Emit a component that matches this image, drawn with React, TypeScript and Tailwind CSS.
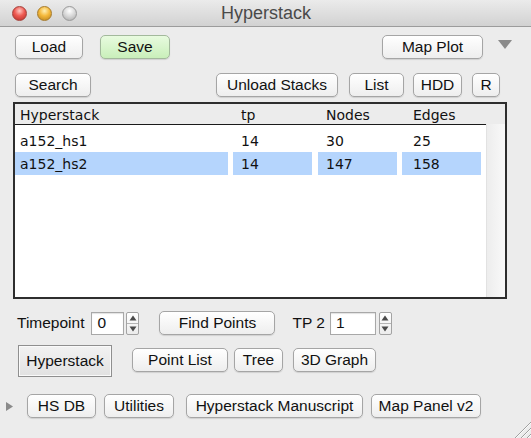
import React from "react";

const btnBase =
  "flex items-center justify-center h-[24px] rounded-[5px] border shadow-[0_1px_1px_rgba(0,0,0,0.12)] text-[15.5px] text-[#111] leading-none font-['Liberation_Sans',Arial,sans-serif] bg-linear-to-b";
const plain = "border-[#a5a5a5] from-white to-[#eeeeee]";
const green = "border-[#a3b99c] from-[#e8fbdf] to-[#c9efba]";

function Btn({
  w,
  children,
  extra = "",
  variant = plain,
}: {
  w: string;
  children: React.ReactNode;
  extra?: string;
  variant?: string;
}) {
  return <div className={`${btnBase} ${variant} ${w} ${extra}`}>{children}</div>;
}

function Stepper() {
  return (
    <div className="flex flex-col w-[13px] h-[23px] border border-[#a3a3a3] bg-linear-to-b from-white to-[#ececec] rounded-[2px]">
      <div className="flex-1 flex items-center justify-center border-b border-[#b5b5b5]">
        <svg width="8" height="6" viewBox="0 0 8 6">
          <path d="M4 0.5 L7.5 5.5 L0.5 5.5 Z" fill="#4a4a4a" />
        </svg>
      </div>
      <div className="flex-1 flex items-center justify-center">
        <svg width="8" height="6" viewBox="0 0 8 6">
          <path d="M0.5 0.5 L7.5 0.5 L4 5.5 Z" fill="#4a4a4a" />
        </svg>
      </div>
    </div>
  );
}

function Light({ cls }: { cls: string }) {
  return <div className={`w-[15px] h-[15px] rounded-full ${cls}`} />;
}

const rows = [
  { name: "a152_hs1", tp: "14", nodes: "30", edges: "25", sel: false },
  { name: "a152_hs2", tp: "14", nodes: "147", edges: "158", sel: true },
];

export default function App() {
  return (
    <div className="relative w-[531px] h-[438px] overflow-hidden bg-[#ececec] font-['Liberation_Sans',Arial,sans-serif] text-[#111]">
      {/* Title bar */}
      <div className="relative h-[27px] flex items-center bg-linear-to-b from-[#ebebeb] to-[#d2d2d2] border-b border-[#9c9c9c]">
        <div className="flex items-center gap-[10px] pl-[12px]">
          <Light cls="bg-[radial-gradient(circle_at_50%_30%,#ffc9c4,#ee5a52_45%,#b22d27)] border border-[#a6403a]" />
          <Light cls="bg-[radial-gradient(circle_at_50%_30%,#fff0b5,#f5b93b_45%,#b7801c)] border border-[#a67a2a]" />
          <Light cls="bg-[radial-gradient(circle_at_50%_30%,#ffffff,#d6d6d6_50%,#a8a8a8)] border border-[#9a9a9a]" />
        </div>
        <div className="absolute inset-0 flex items-center justify-center text-[18px] text-[#4a4a4a] pl-[1px]">
          Hyperstack
        </div>
      </div>

      {/* Row 1 */}
      <div className="flex items-center mt-[8px] pl-[15px] pr-[19px]">
        <Btn w="w-[68px]">Load</Btn>
        <Btn w="w-[70px]" extra="ml-[17px]" variant={green}>
          Save
        </Btn>
        <Btn w="w-[101px]" extra="ml-auto">
          Map Plot
        </Btn>
        <svg className="ml-[15px] mb-[6px]" width="14" height="9" viewBox="0 0 14 9">
          <path d="M0 0 L14 0 L7 9 Z" fill="#8a8a8a" />
        </svg>
      </div>

      {/* Row 2 */}
      <div className="flex items-center mt-[14px] pl-[15px]">
        <Btn w="w-[76px]">Search</Btn>
        <Btn w="w-[122px]" extra="ml-[125px]">
          Unload Stacks
        </Btn>
        <Btn w="w-[55px]" extra="ml-[11px]">
          List
        </Btn>
        <Btn w="w-[49px]" extra="ml-[9px]">
          HDD
        </Btn>
        <Btn w="w-[28px]" extra="ml-[10px]">
          R
        </Btn>
      </div>

      {/* Table */}
      <div className="ml-[13px] mt-[5px] w-[494px] h-[197px] border-2 border-[#2e2e2e] bg-white flex flex-col font-['DejaVu_Sans',Verdana,sans-serif] text-[14px] text-[#111] overflow-hidden">
        <div className="h-[20px] flex items-center pt-[3px] bg-[#ececec] shrink-0">
          <div className="w-[218px] pl-[5px]">Hyperstack</div>
          <div className="w-[85px] pl-[8px]">tp</div>
          <div className="w-[84px] pl-[8px]">Nodes</div>
          <div className="pl-[11px]">Edges</div>
        </div>
        <div className="flex flex-1">
          <div className="w-[471px] flex flex-col border-t border-[#1a1a1a]">
            <div className="h-[4px]" />
            {rows.map((r) => {
              const c = r.sel ? "bg-[#b5d5fd]" : "";
              return (
                <div key={r.name} className="flex h-[23px] items-center">
                  <div className={`w-[213px] h-full flex items-center pl-[5px] pt-[1px] ${c}`}>{r.name}</div>
                  <div className={`ml-[5px] w-[79px] h-full flex items-center pl-[8px] pt-[1px] ${c}`}>{r.tp}</div>
                  <div className={`ml-[6px] w-[79px] h-full flex items-center pl-[8px] pt-[1px] ${c}`}>{r.nodes}</div>
                  <div className={`ml-[5px] w-[79px] h-full flex items-center pl-[11px] pt-[1px] ${c}`}>{r.edges}</div>
                </div>
              );
            })}
          </div>
          <div className="flex-1 bg-linear-to-r from-[#ededed] to-[#f9f9f9] border-l border-[#e2e2e2]" />
        </div>
      </div>

      {/* Timepoint row */}
      <div className="flex items-center mt-[12px] pl-[17px] text-[15.5px]">
        <span>Timepoint</span>
        <div className="ml-[7px] w-[33px] h-[23px] bg-white border border-[#a8a8a8] shadow-[inset_0_1px_1px_rgba(0,0,0,0.12)] flex items-center pl-[5px]">
          0
        </div>
        <div className="ml-[2px]">
          <Stepper />
        </div>
        <Btn w="w-[116px]" extra="ml-[20px] h-[23px]">
          Find Points
        </Btn>
        <span className="ml-[17px]">TP 2</span>
        <div className="ml-[5px] w-[46px] h-[23px] bg-white border border-[#a8a8a8] shadow-[inset_0_1px_1px_rgba(0,0,0,0.12)] flex items-center pl-[5px]">
          1
        </div>
        <div className="ml-[3px]">
          <Stepper />
        </div>
      </div>

      {/* Row 3 */}
      <div className="flex items-center mt-[10px] pl-[18px]">
        <div className="w-[94px] h-[32px] flex items-center justify-center border border-[#8f8f8f] bg-linear-to-b from-[#f2f2f2] to-[#e2e2e2] shadow-[inset_0_0_0_1px_#fafafa] text-[15.5px]">
          Hyperstack
        </div>
        <Btn w="w-[96px]" extra="ml-[20px] h-[23px] mb-[3px]">
          Point List
        </Btn>
        <Btn w="w-[49px]" extra="ml-[6px] h-[23px] mb-[3px]">
          Tree
        </Btn>
        <Btn w="w-[83px]" extra="ml-[10px] h-[23px] mb-[3px]">
          3D Graph
        </Btn>
      </div>

      {/* Row 4 */}
      <div className="flex items-center mt-[17px] pl-[6px]">
        <svg width="7" height="9" viewBox="0 0 7 9">
          <path d="M0 0 L7 4.5 L0 9 Z" fill="#8a8a8a" />
        </svg>
        <Btn w="w-[69px]" extra="ml-[14px] h-[23px]">
          HS DB
        </Btn>
        <Btn w="w-[70px]" extra="ml-[8px] h-[23px]">
          Utilities
        </Btn>
        <Btn w="w-[177px]" extra="ml-[12px] h-[23px]">
          Hyperstack Manuscript
        </Btn>
        <Btn w="w-[110px]" extra="ml-[8px] h-[23px]">
          Map Panel v2
        </Btn>
      </div>

      {/* Resize grip */}
      <svg className="absolute right-0 bottom-0" width="22" height="20" viewBox="0 0 22 20">
        <path d="M6 20 L22 4 M12 20 L22 10 M18 20 L22 16" stroke="#a0a0a0" strokeWidth="1" />
        <path d="M7 20 L22 5 M13 20 L22 11 M19 20 L22 17" stroke="#fafafa" strokeWidth="1" />
      </svg>
    </div>
  );
}
